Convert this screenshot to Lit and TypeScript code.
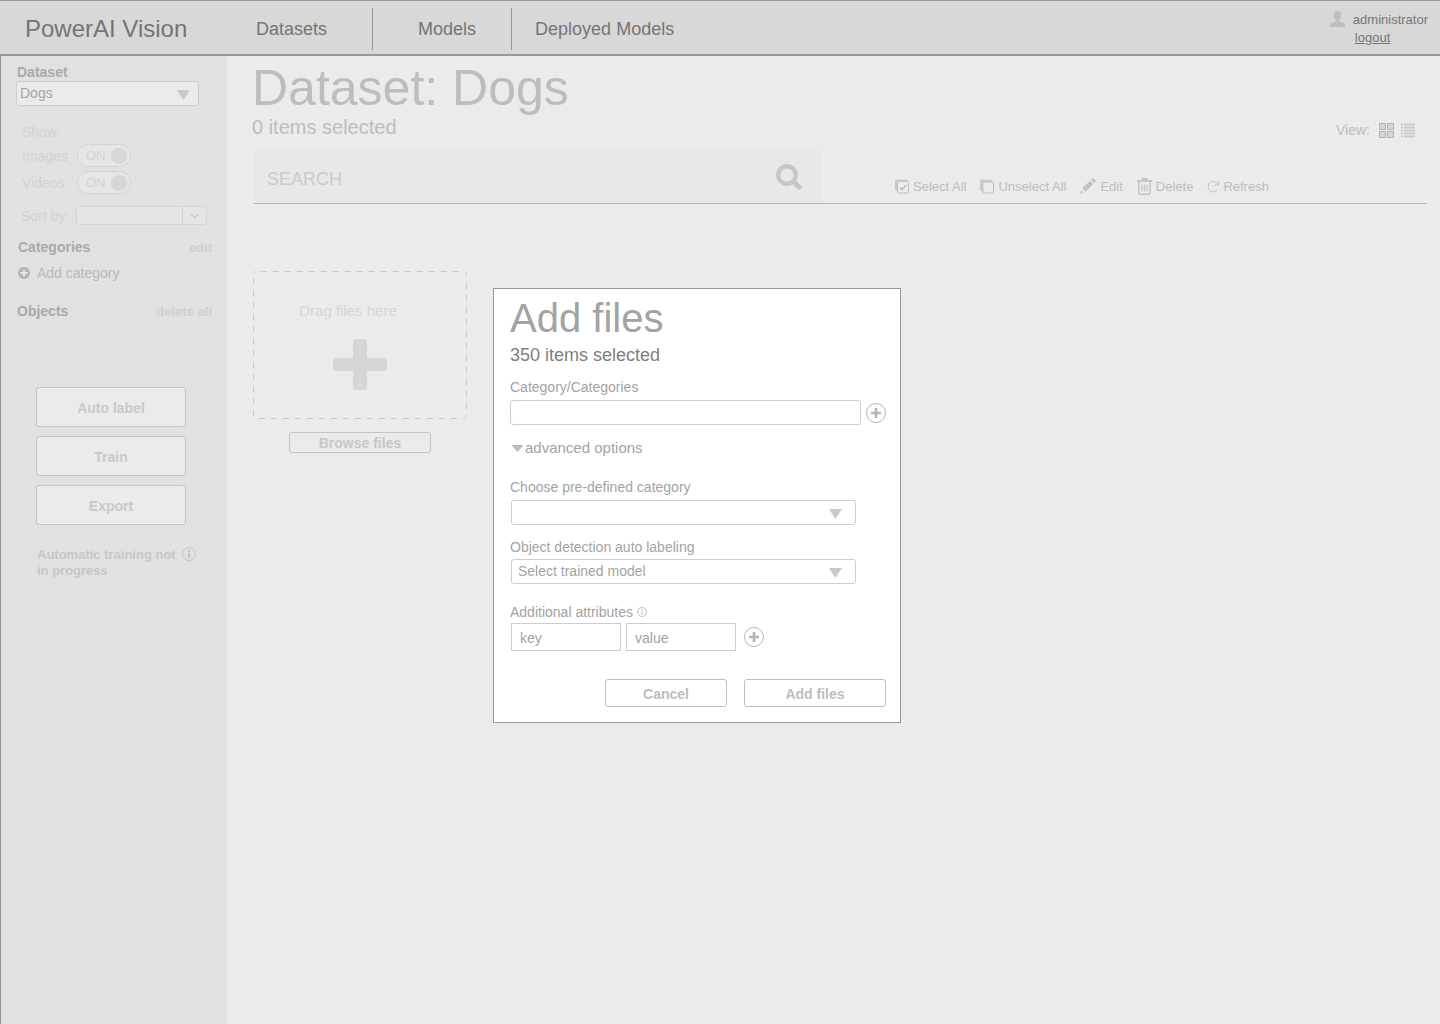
import { LitElement, html, css, svg } from "lit";
import { customElement, state } from "lit/decorators.js";

const font = css`"Liberation Sans", Arial, Helvetica, sans-serif`;

const base = css`
  :host,
  * {
    box-sizing: border-box;
  }
  h1,
  h2,
  p {
    margin: 0;
    font-weight: normal;
  }
  button,
  input,
  select {
    margin: 0;
    padding: 0;
    font-family: inherit;
    font-size: 14px;
    color: inherit;
    background: none;
    border: none;
    outline-offset: 2px;
  }
  button,
  select {
    cursor: pointer;
  }
  svg {
    display: block;
    flex: none;
  }
  .pick {
    display: grid;
    align-items: center;
  }
  .pick > select,
  .pick > .arrow {
    grid-area: 1 / 1;
  }
  .pick > select {
    appearance: none;
    width: 100%;
    height: 25px;
    padding-bottom: 2px;
    border: 1px solid #cdcdcd;
    border-radius: 3px;
  }
  .pick > .arrow {
    justify-self: end;
    pointer-events: none;
  }
  .outline {
    padding-top: 2px;
    border: 1px solid #bdbdc2;
    border-radius: 3px;
    font-weight: bold;
    color: #bdbdbd;
  }
`;

const arrow = svg`<svg class="arrow" width="13" height="10" viewBox="0 0 13 10" aria-hidden="true"><path d="M0 0h13L6.5 10z" fill="#c9c9c9"/></svg>`;

const addCircle = svg`<svg width="20" height="20" viewBox="0 0 20 20" aria-hidden="true"><circle cx="10" cy="10" r="9.5" fill="none" stroke="#b5b5b8"/><path d="M10 5v10M5 10h10" stroke="#b5b5b8" stroke-width="2.600"/></svg>`;

const actionIcons = {
  select: svg`<svg width="14" height="15" viewBox="0 0 14 15"><path d="M1 .5h10.500l1 1.500H2.500v10.500L0 11V1.500q0-1 1-1z" fill="#c9c9c9"/><rect x="2.500" y="2.500" width="11" height="11.500" rx="1" fill="none" stroke="#bfbfbf"/><path d="M5 8.500l2 2.100L11.200 6" fill="none" stroke="#bfbfbf" stroke-width="1.700"/></svg>`,
  unselect: svg`<svg width="14" height="15" viewBox="0 0 14 15"><path d="M1 .5h10l1.500 2.500H3v10.500L0 11V1.500q0-1 1-1z" fill="#c9c9c9"/><rect x="2.900" y="3" width="10.600" height="11" rx="1" fill="#ebebeb" stroke="#bfbfbf"/></svg>`,
  edit: svg`<svg width="16" height="16" viewBox="0 0 16 16"><path d="M10 2.800l3.200 3.200-7.700 7.700-3.200-3.200zM11 1.900l1.400-1.500q.6-.5 1.200 0l2 2q.5.600 0 1.200L14.100 5zM1.600 12.500l1.900 1.900L0 16z" fill="#c2c2c2"/></svg>`,
  remove: svg`<svg width="15" height="17" viewBox="0 0 15 17"><path d="M4.500 2.500V1.300Q4.500.5 5.300.5h4.400q.8 0 .8 .8v1.200" fill="#c4c4c4" stroke="#c4c4c4"/><path d="M0 3h15" stroke="#c6c6c6" stroke-width="2"/><path d="M1.800 4v10.500q0 1.700 1.700 1.700h8q1.700 0 1.700-1.700V4" fill="none" stroke="#c2c2c2" stroke-width="1.400"/><path d="M4.900 6.500v7M7.500 6.500v7M10.100 6.500v7" stroke="#c9c9c9" stroke-width="1.400"/></svg>`,
  refresh: svg`<svg width="12" height="13" viewBox="0 0 12 13"><path d="M9.800 10.300A5 5.300 0 1 1 9.900 3.200L11 4.800" fill="none" stroke="#c4c4c4"/><path d="M11.300 1v4.200H7.200" fill="none" stroke="#c4c4c4"/></svg>`,
};

@customElement("top-bar")
export class TopBar extends LitElement {
  static styles = [
    base,
    css`
      :host {
        display: flex;
        align-items: center;
        height: 56px;
        padding: 3px 12px 0 25px;
        background: #d8d8d8;
        border-top: 1px solid #979797;
        border-bottom: 2px solid #979797;
        color: #757575;
      }
      a {
        color: inherit;
        text-decoration: none;
      }
      .brand {
        width: 231px;
        padding-bottom: 1px;
        font-size: 24px;
        line-height: 28px;
      }
      nav {
        display: flex;
        align-items: center;
        font-size: 18px;
        line-height: 42px;
      }
      .item {
        padding-right: 45px;
        border-right: 1px solid #979797;
        margin-right: 45px;
      }
      .item.narrow {
        padding-right: 35px;
        margin-right: 23px;
      }
      .account {
        display: grid;
        grid-template-columns: auto auto;
        column-gap: 8px;
        margin-left: auto;
        font-size: 13px;
        line-height: 18px;
      }
      .logout {
        grid-column: 2;
        padding-left: 2px;
        text-decoration: underline;
      }
    `,
  ];

  render() {
    return html`
      <a class="brand" href="#home">PowerAI Vision</a>
      <nav>
        <a class="item" href="#datasets">Datasets</a>
        <a class="item narrow" href="#models">Models</a>
        <a href="#deployed">Deployed Models</a>
      </nav>
      <div class="account">
        <svg width="15" height="16" viewBox="0 0 15 16" aria-hidden="true">
          <path d="M7.500 0c2.600 0 3.800 1.800 3.800 4.200 0 1.900-.8 3.600-1.800 4.500v1.800l3.700 1.300c1.200.5 1.800 1.300 1.800 2.700V16H0v-1.500c0-1.400.6-2.200 1.800-2.700l3.700-1.300V8.700C4.500 7.800 3.700 6.100 3.700 4.200 3.700 1.800 4.900 0 7.500 0z" fill="#bebebf" />
        </svg>
        <span>administrator</span>
        <a class="logout" href="#logout">logout</a>
      </div>
    `;
  }
}

@customElement("side-panel")
export class SidePanel extends LitElement {
  static styles = [
    base,
    css`
      :host {
        display: block;
        padding: 8px 15px 24px;
        background: #e1e1e1;
        border-left: 1px solid #979797;
        font-size: 14px;
        line-height: 16px;
        color: #b9b9b9;
      }
      .heading {
        display: block;
        font-weight: bold;
        color: #a9a9a9;
      }
      .dataset {
        padding-left: 1px;
      }
      .dataset-pick {
        width: 183px;
        margin-top: 1px;
      }
      .dataset-pick > select {
        padding-left: 3px;
        background: #ebebeb;
        color: #a5a5a5;
      }
      .dataset-pick > .arrow {
        margin: 2px 9px 0 0;
      }
      .filters {
        display: grid;
        grid-template-columns: 55px auto;
        justify-content: start;
        align-items: center;
        row-gap: 4px;
        margin-top: 18px;
        padding-left: 6px;
        color: #d2d2d2;
      }
      .show {
        grid-column: 1 / 3;
      }
      .switch {
        position: relative;
        display: flex;
        align-items: center;
        justify-content: space-between;
        width: 54px;
        height: 23px;
        padding: 0 3px 0 8px;
        border: 1px solid #d4d4d4;
        border-radius: 12px;
        background: #e6e6e6;
        font-size: 13px;
      }
      .switch > input {
        position: absolute;
        inset: 0;
        width: 100%;
        height: 100%;
        opacity: 0;
      }
      .knob {
        width: 16px;
        height: 16px;
        border-radius: 50%;
        background: #d6d8d8;
      }
      .sort {
        display: flex;
        align-items: center;
        gap: 7px;
        margin-top: 12px;
        padding-left: 5px;
        color: #d2d2d2;
      }
      .sort-pick {
        width: 131px;
      }
      .sort-pick > select {
        height: 19px;
        background: #e6e6e6;
        border-color: #d4d4d4;
      }
      .row {
        display: flex;
        justify-content: space-between;
        padding: 0 0 0 2px;
        margin-top: 14px;
      }
      .objects {
        margin-top: 22px;
        padding-left: 1px;
      }
      .link {
        font-size: 13px;
        font-weight: bold;
        color: #d0d0d0;
      }
      .add {
        display: flex;
        align-items: center;
        gap: 7px;
        margin-top: 10px;
        padding-left: 2px;
        line-height: 16px;
      }
      .buttons {
        display: grid;
        gap: 9px;
        width: 150px;
        margin: 68px 0 0 20px;
      }
      .buttons > .outline {
        height: 40px;
        background: #ebebeb;
        border-color: #c4c4c8;
        color: #c9c9c9;
      }
      .status {
        display: flex;
        gap: 4px;
        margin: 22px 0 0 21px;
        font-size: 13px;
        font-weight: bold;
        color: #c7c7c7;
      }
      .status > p {
        width: 141px;
        font-weight: bold;
      }
    `,
  ];

  @state() private filters = [
    { id: "images", name: "Images", on: true },
    { id: "videos", name: "Videos", on: true },
  ];

  render() {
    return html`
      <label class="heading dataset" for="dataset">Dataset</label>
      <div class="pick dataset-pick">
        <select id="dataset">
          <option>Dogs</option>
        </select>
        ${arrow}
      </div>

      <div class="filters">
        <span class="show">Show:</span>
        ${this.filters.map(
          (f) => html`
            <label for=${f.id}>${f.name}</label>
            <span class="switch">
              <span>ON</span>
              <span class="knob"></span>
              <input id=${f.id} type="checkbox" role="switch" .checked=${f.on} />
            </span>
          `
        )}
      </div>

      <div class="sort">
        <label for="sort">Sort by:</label>
        <div class="pick sort-pick">
          <select id="sort">
            <option></option>
          </select>
          <svg class="arrow" width="25" height="19" viewBox="0 0 25 19" aria-hidden="true">
            <path d="M.5 0v19" stroke="#d4d4d4" />
            <path d="M8.500 8l4 3.500 4-3.500" fill="none" stroke="#cacaca" stroke-width="1.300" />
          </svg>
        </div>
      </div>

      <div class="row">
        <span class="heading">Categories</span>
        <button class="link">edit</button>
      </div>
      <button class="add">
        <svg width="12" height="12" viewBox="0 0 12 12" aria-hidden="true">
          <circle cx="6" cy="6" r="6" fill="#b3b3b3" />
          <path d="M6 2.500v7M2.500 6h7" stroke="#e6e6e6" stroke-width="2" />
        </svg>
        Add category
      </button>
      <div class="row objects">
        <span class="heading">Objects</span>
        <button class="link">delete all</button>
      </div>

      <div class="buttons">
        <button class="outline">Auto label</button>
        <button class="outline">Train</button>
        <button class="outline">Export</button>
      </div>
      <div class="status">
        <p>Automatic training not in progress</p>
        <svg width="14" height="14" viewBox="0 0 14 14" aria-hidden="true">
          <circle cx="7" cy="7" r="6.500" fill="none" stroke="#c4c4c4" />
          <path d="M7 3v2M7 6v5" stroke="#c4c4c4" stroke-width="2" />
        </svg>
      </div>
    `;
  }
}

@customElement("dataset-view")
export class DatasetView extends LitElement {
  static styles = [
    base,
    css`
      :host {
        display: block;
        flex: 1;
        min-width: 0;
        padding: 4px 13px 24px 25px;
        color: #bdbdbd;
      }
      .head {
        display: flex;
        justify-content: space-between;
        align-items: flex-end;
      }
      h1 {
        font-size: 50px;
        line-height: 56px;
      }
      .count {
        font-size: 20px;
        line-height: 22px;
      }
      .view {
        display: flex;
        align-items: center;
        gap: 7px;
        padding-right: 12px;
        font-size: 14px;
        line-height: 16px;
      }
      .view > span {
        margin-right: 2px;
      }
      .tools {
        display: flex;
        align-items: flex-end;
        margin: 12px 0 0 2px;
        border-bottom: 1px solid #b5b5b5;
      }
      .search {
        display: flex;
        align-items: center;
        width: 568px;
        height: 53px;
        padding: 0 20px 0 13px;
        background: #e8e8e8;
      }
      .search > input {
        flex: 1;
        min-width: 0;
        height: 100%;
        padding-top: 5px;
        font-size: 18px;
      }
      .search > input::placeholder {
        color: #cbcbcb;
        opacity: 1;
      }
      .actions {
        display: flex;
        gap: 14px;
        margin-left: 73px;
        padding-bottom: 8px;
      }
      .action {
        display: flex;
        align-items: center;
        gap: 4px;
        height: 18px;
        font-size: 13px;
        white-space: nowrap;
      }
      .upload {
        display: grid;
        justify-items: center;
        width: 214px;
        margin: 67px 0 0 1px;
      }
      .drop {
        display: grid;
        width: 100%;
      }
      .drop > * {
        grid-area: 1 / 1;
      }
      .hint {
        display: grid;
        justify-items: center;
        align-content: start;
        gap: 19px;
        padding-top: 31px;
        font-size: 15px;
        line-height: 18px;
        color: #d6d6d6;
      }
      .hint > p {
        padding-right: 24px;
      }
      .browse {
        width: 142px;
        height: 21px;
        margin-top: 13px;
        padding: 0;
        border-color: #c4c4c8;
        color: #c7c7c7;
      }
    `,
  ];

  render() {
    return html`
      <div class="head">
        <div>
          <h1>Dataset: Dogs</h1>
          <p class="count">0 items selected</p>
        </div>
        <div class="view">
          <span>View:</span>
          <button aria-label="Grid view">
            <svg width="15" height="15" viewBox="0 0 15 15">
              <path d="M.5.5h6v6h-6zM8.500.5h6v6h-6zM.5 8.500h6v6h-6zM8.500 8.500h6v6h-6z" fill="#d6d6d6" stroke="#b2b2b2" />
            </svg>
          </button>
          <button aria-label="List view">
            <svg width="14" height="15" viewBox="0 0 14 15">
              <path d="M0 1.500h2M0 4.500h2M0 7.500h2M0 10.500h2M0 13.500h2M3 1.500h11M3 4.500h11M3 7.500h11M3 10.500h11M3 13.500h11" stroke="#cccccc" stroke-width="2" />
            </svg>
          </button>
        </div>
      </div>

      <div class="tools">
        <div class="search">
          <input type="search" aria-label="Search" placeholder="SEARCH" />
          <button aria-label="Run search">
            <svg width="26" height="26" viewBox="0 0 26 26">
              <circle cx="11" cy="11" r="8.800" fill="none" stroke="#c6c6c8" stroke-width="4.400" />
              <path d="M17.500 17.500l5.700 5.700" stroke="#c6c6c8" stroke-width="4.800" stroke-linecap="round" />
            </svg>
          </button>
        </div>
        <div class="actions">
          <button class="action">${actionIcons.select}Select All</button>
          <button class="action">${actionIcons.unselect}Unselect All</button>
          <button class="action">${actionIcons.edit}Edit</button>
          <button class="action">${actionIcons.remove}Delete</button>
          <button class="action">${actionIcons.refresh}Refresh</button>
        </div>
      </div>

      <div class="upload">
        <div class="drop">
          <svg width="214" height="148" viewBox="0 0 214 148" aria-hidden="true">
            <rect x=".5" y=".5" width="213" height="147" rx="3" fill="none" stroke="#c9cacb" stroke-dasharray="6 6" stroke-dashoffset="-4" />
          </svg>
          <div class="hint">
            <p>Drag files here</p>
            <svg width="54" height="51" viewBox="0 0 54 51" aria-hidden="true">
              <rect x="20" width="14" height="51" rx="3" fill="#d6d6d6" />
              <rect y="19" width="54" height="13" rx="3" fill="#d6d6d6" />
            </svg>
          </div>
        </div>
        <button class="outline browse">Browse files</button>
      </div>
    `;
  }
}

@customElement("add-files-dialog")
export class AddFilesDialog extends LitElement {
  static styles = [
    base,
    css`
      :host {
        display: block;
        width: 408px;
        padding: 7px 14px 15px 16px;
        background: #ffffff;
        border: 1px solid #979797;
        font-size: 14px;
        line-height: 16px;
        color: #a3a3a3;
      }
      h2 {
        font-size: 40px;
        line-height: 44px;
      }
      .count {
        margin-top: 5px;
        font-size: 18px;
        line-height: 20px;
        color: #7f7f7f;
      }
      label {
        display: block;
        margin: 14px 0 5px;
      }
      .line {
        display: flex;
        align-items: center;
        gap: 5px;
      }
      input {
        min-width: 0;
        border: 1px solid #cdcdcd;
      }
      .category {
        flex: 1;
        height: 25px;
        padding: 0 8px;
        border-radius: 3px;
      }
      .advanced {
        display: flex;
        align-items: center;
        gap: 2px;
        margin-top: 14px;
        padding-left: 2px;
        font-size: 15px;
        line-height: 18px;
      }
      .first {
        margin-top: 22px;
      }
      .second {
        margin-bottom: 4px;
      }
      .pick {
        margin: 0 30px 0 1px;
      }
      .pick > select {
        padding-left: 6px;
      }
      .pick > .arrow {
        margin: 2px 14px 0 0;
      }
      .caption {
        display: flex;
        align-items: center;
        gap: 4px;
        margin: 20px 0 3px;
      }
      .pair {
        padding-left: 1px;
      }
      .pair > input {
        width: 110px;
        height: 28px;
        padding: 2px 8px 0;
      }
      .pair > button {
        margin-left: 3px;
      }
      input::placeholder {
        color: #a3a3a3;
        opacity: 1;
      }
      .footer {
        display: flex;
        justify-content: flex-end;
        gap: 17px;
        margin-top: 28px;
      }
      .footer > button {
        width: 142px;
        height: 28px;
      }
      .footer > .cancel {
        width: 122px;
      }
    `,
  ];

  render() {
    return html`
      <h2>Add files</h2>
      <p class="count">350 items selected</p>

      <label for="category">Category/Categories</label>
      <div class="line">
        <input class="category" id="category" type="text" />
        <button aria-label="Add category">${addCircle}</button>
      </div>

      <button class="advanced" aria-expanded="true">
        <svg width="11" height="7" viewBox="0 0 11 7" aria-hidden="true">
          <path d="M0 0h11v1L6.500 6q-1 1-2 0L0 1z" fill="#bdbdbf" />
        </svg>
        advanced options
      </button>

      <label class="first" for="predefined">Choose pre-defined category</label>
      <div class="pick">
        <select id="predefined">
          <option></option>
        </select>
        ${arrow}
      </div>

      <label class="second" for="model">Object detection auto labeling</label>
      <div class="pick">
        <select id="model">
          <option>Select trained model</option>
        </select>
        ${arrow}
      </div>

      <div class="caption">
        Additional attributes
        <svg width="10" height="10" viewBox="0 0 10 10" aria-hidden="true">
          <circle cx="5" cy="5" r="4.500" fill="none" stroke="#bdbdbd" />
          <path d="M5 2v1.200M5 4.200V8" stroke="#bdbdbd" />
        </svg>
      </div>
      <div class="line pair">
        <input type="text" aria-label="Attribute key" placeholder="key" />
        <input type="text" aria-label="Attribute value" placeholder="value" />
        <button aria-label="Add attribute">${addCircle}</button>
      </div>

      <div class="footer">
        <button class="outline cancel">Cancel</button>
        <button class="outline">Add files</button>
      </div>
    `;
  }
}

@customElement("app-root")
export class AppRoot extends LitElement {
  static styles = css`
    :host {
      position: relative;
      display: flex;
      flex-direction: column;
      min-height: 100vh;
      background: #ebebeb;
      font-family: ${font};
    }
    .body {
      display: flex;
      flex: 1;
    }
    side-panel {
      width: 227px;
      flex: none;
    }
    add-files-dialog {
      position: absolute;
      top: 288px;
      left: 493px;
    }
  `;

  render() {
    return html`
      <top-bar></top-bar>
      <div class="body">
        <side-panel></side-panel>
        <dataset-view></dataset-view>
      </div>
      <add-files-dialog role="dialog" aria-label="Add files"></add-files-dialog>
    `;
  }
}
